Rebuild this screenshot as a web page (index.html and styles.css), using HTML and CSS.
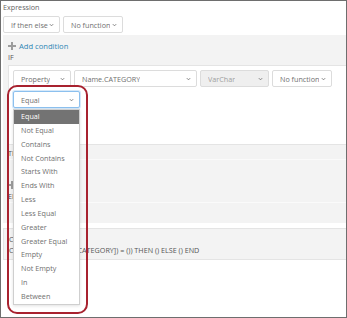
FILE: index.html
```html
<!DOCTYPE html>
<html lang="en">
<head>
    <meta charset="UTF-8">
    <title>Expression</title>
    <link rel="stylesheet" href="styles.css">
</head>
<body>
    <div class="frame">
        <div class="title">Expression</div>
        <div class="toolbar">
            <div class="select w-ifthen"><span>If then else</span><svg class="chev" viewBox="0 0 6 4"><path d="M1 1l2 2 2-2"/></svg></div>
            <div class="select w-func"><span>No function</span><svg class="chev" viewBox="0 0 6 4"><path d="M1 1l2 2 2-2"/></svg></div>
        </div>

        <div class="panel">
            <div class="add">
                <svg class="plus" viewBox="0 0 8 8"><path d="M3 0h2v3h3v2H5v3H3V5H0V3h3z"/></svg>
                <span>Add condition</span>
            </div>
            <div class="section-label">IF</div>
            <div class="box">
                <div class="row">
                    <div class="select w-prop"><span>Property</span><svg class="chev" viewBox="0 0 6 4"><path d="M1 1l2 2 2-2"/></svg></div>
                    <div class="select w-name"><span>Name.CATEGORY</span><svg class="chev" viewBox="0 0 6 4"><path d="M1 1l2 2 2-2"/></svg></div>
                    <div class="select w-type disabled"><span>VarChar</span><svg class="chev" viewBox="0 0 6 4"><path d="M1 1l2 2 2-2"/></svg></div>
                    <div class="select w-nofunc"><span>No function</span><svg class="chev" viewBox="0 0 6 4"><path d="M1 1l2 2 2-2"/></svg></div>
                </div>
                <div class="select w-op focused"><span>Equal</span><svg class="chev" viewBox="0 0 6 4"><path d="M1 1l2 2 2-2"/></svg></div>
            </div>

            <div class="section-label then-label">THEN</div>
            <div class="sub-box"></div>
            <div class="add add-small">
                <svg class="plus" viewBox="0 0 8 8"><path d="M3 0h2v3h3v2H5v3H3V5H0V3h3z"/></svg>
            </div>
            <div class="section-label">ELSE</div>
            <div class="sub-box"></div>
        </div>

        <div class="condition">
            <div>Condition</div>
            <div>CASE WHEN ([Name.CATEGORY]) = ()) THEN () ELSE () END</div>
        </div>

        <!-- open dropdown of the operator select -->
        <ul class="options">
            <li class="active">Equal</li>
            <li>Not Equal</li>
            <li>Contains</li>
            <li>Not Contains</li>
            <li>Starts With</li>
            <li>Ends With</li>
            <li>Less</li>
            <li>Less Equal</li>
            <li>Greater</li>
            <li>Greater Equal</li>
            <li>Empty</li>
            <li>Not Empty</li>
            <li>In</li>
            <li>Between</li>
        </ul>
        <div class="highlight"></div>
    </div>
</body>
</html>
```

FILE: styles.css
```css
body {
    margin: 0;
    background-color: #fff;
    font-family: "Open Sans", "Liberation Sans", sans-serif;
}

.frame {
    position: relative;
    width: 347px;
    height: 318px;
    box-sizing: border-box;
    border: 1px solid #6e6e6e;
    overflow: hidden;
    font-size: 7.2px;
    color: #666;
}

.title {
    padding-left: 2px;
    line-height: 12px;
}

.toolbar {
    display: flex;
    gap: 3px;
    margin-top: 3px;
    padding-left: 2px;
}

.select {
    display: flex;
    align-items: center;
    justify-content: space-between;
    height: 17px;
    box-sizing: border-box;
    padding: 0 5px 0 7px;
    background-color: #fff;
    border: 1px solid #dcdcdc;
    border-radius: 2px;
    white-space: nowrap;
    color: #707070;
}

.select span {
    overflow: hidden;
}

.select.disabled {
    background-color: #efefef;
    color: #a0a0a0;
}

.select.focused {
    border-color: #8cc0ee;
    box-shadow: 0 0 0 1px rgba(140, 192, 238, 0.35);
}

.chev {
    width: 5px;
    height: 4px;
    flex-shrink: 0;
}

.chev path {
    fill: none;
    stroke: #777;
    stroke-width: 1.1;
}

.w-ifthen { width: 57px; }
.w-func { width: 60px; }
.w-prop { width: 58px; }
.w-name { width: 123px; }
.w-type { width: 69px; }
.w-nofunc { width: 60px; }
.w-op { width: 67px; margin-top: 4px; }

.panel {
    height: 188px;
    box-sizing: border-box;
    margin: 2px 0 0 2px;
    padding: 6px 0 0 5px;
    background-color: #f3f3f3;
}

.add {
    display: flex;
    align-items: center;
    gap: 3px;
    height: 10px;
    color: #2d86b3;
    font-size: 7.6px;
}

.plus {
    width: 8px;
    height: 8px;
    fill: #9c9c9c;
}

.section-label {
    margin-top: 1px;
    line-height: 10px;
    color: #555;
}

.box {
    height: 80px;
    box-sizing: border-box;
    margin-top: 3px;
    padding: 4px;
    background-color: #fff;
    border: 1px solid #e4e4e4;
    border-right: none;
}

.row {
    display: flex;
    gap: 3px;
}

.then-label {
    margin-top: 3px;
}

.sub-box {
    height: 18px;
    margin-top: 1px;
    border-top: 1px solid #fafafa;
}

.add-small {
    margin-top: 2px;
}

.condition {
    margin: 5px 0 0 2px;
    height: 32px;
    box-sizing: border-box;
    padding: 5px 5px 0;
    line-height: 11px;
    background-color: #f3f3f3;
    border: 1px solid #e4e4e4;
    border-right: none;
    color: #555;
}

.options {
    position: absolute;
    left: 12px;
    top: 108px;
    width: 67px;
    margin: 0;
    padding: 0;
    list-style: none;
    box-sizing: border-box;
    background-color: #fff;
    border: 1px solid #cfcfcf;
    box-shadow: 0 1px 3px rgba(0, 0, 0, 0.12);
}

.options li {
    height: 13.85px;
    line-height: 13.85px;
    padding-left: 7px;
    color: #707070;
}

.options li.active {
    background-color: #737373;
    color: #fff;
}

.highlight {
    position: absolute;
    left: 6px;
    top: 84px;
    width: 81px;
    height: 229px;
    box-sizing: border-box;
    border: 2px solid #a8222f;
    border-radius: 10px;
}
```
